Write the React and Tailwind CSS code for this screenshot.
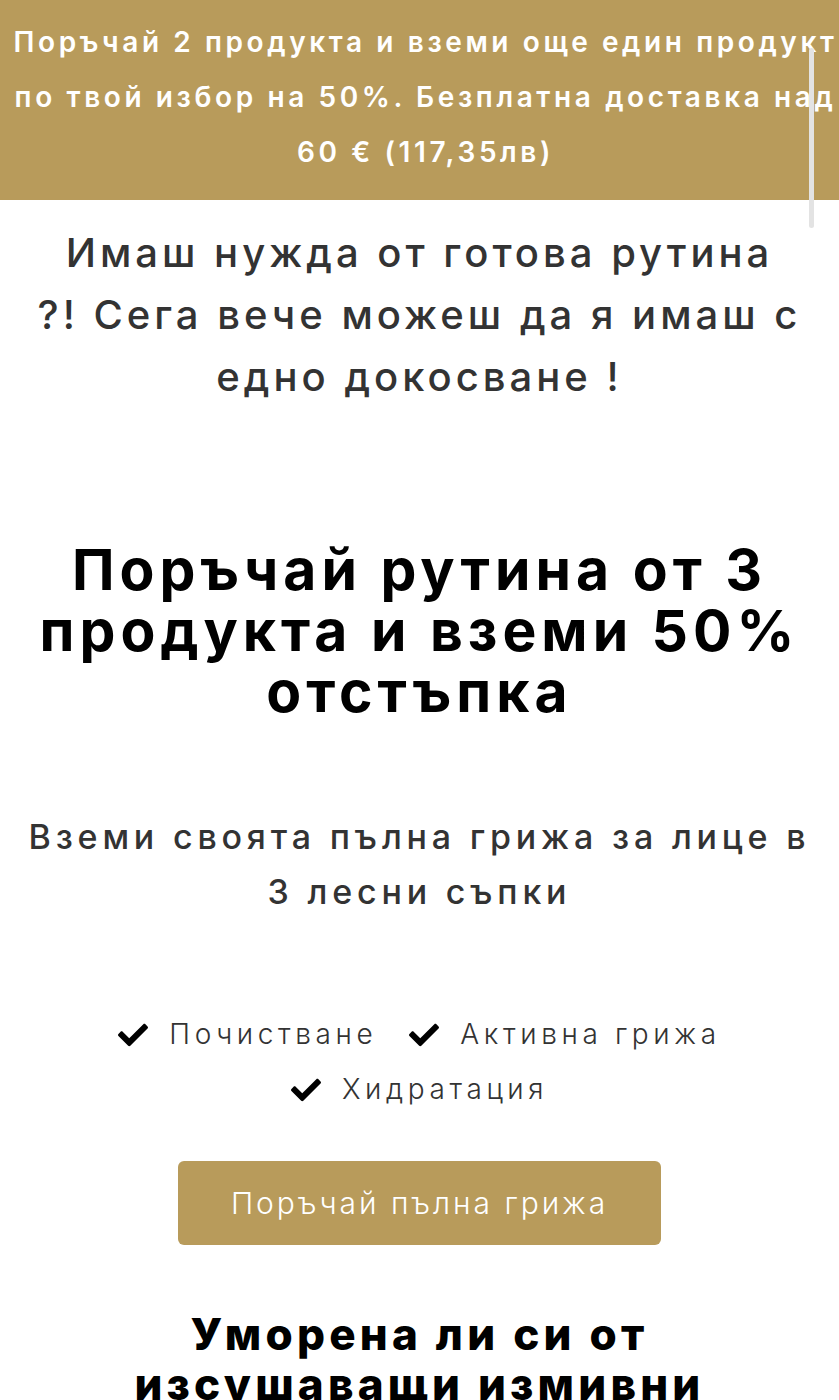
import React from "react";
import { FaCheck } from "react-icons/fa";

const font = { fontFamily: 'Inter, "Noto Sans", sans-serif' };

function Check() {
  return <FaCheck className="shrink-0 text-black w-[30px] h-[30px]" />;
}

export default function App() {
  return (
    <div lang="bg" className="relative w-[839px] h-[1400px] overflow-hidden bg-white" style={font}>
      <div className="absolute left-[809px] top-[48px] w-[5px] h-[180px] rounded-full bg-[#e3e3e3] z-10" />

      <div className="h-[200px] bg-[#b89b5b] flex flex-col justify-center pl-[12px] pb-[6px] overflow-hidden">
        <div className="text-white text-[28px] leading-[55px] font-semibold text-center whitespace-nowrap tracking-[3.6px]">
          <div>Поръчай 2 продукта и вземи още един продукт</div>
          <div>по твой избор на 50%. Безплатна доставка над</div>
          <div>60 € (117,35лв)</div>
        </div>
      </div>

      <div className="flex flex-col items-center text-center">
        <h2 className="mt-[22px] text-[#333333] text-[40px] leading-[62px] font-medium whitespace-nowrap tracking-[4px]">
          <div>Имаш нужда от готова рутина</div>
          <div>?! Сега вече можеш да я имаш с</div>
          <div>едно докосване !</div>
        </h2>

        <h1 className="mt-[131px] text-black text-[57px] leading-[61px] font-bold whitespace-nowrap tracking-[5px]">
          <div>Поръчай рутина от 3</div>
          <div>продукта и вземи 50%</div>
          <div>отстъпка</div>
        </h1>

        <h3 className="mt-[87px] text-[#333333] text-[34px] leading-[55px] font-medium whitespace-nowrap tracking-[4.8px]">
          <div>Вземи своята пълна грижа за лице в</div>
          <div>3 лесни съпки</div>
        </h3>

        <div className="mt-[88px] w-[700px] flex flex-wrap justify-center text-[#333333] text-[28px] leading-[55px] font-light tracking-[4.6px]">
          <div className="flex items-center gap-[21px] mx-[16px]">
            <Check />
            <span>Почистване</span>
          </div>
          <div className="flex items-center gap-[21px] mx-[16px]">
            <Check />
            <span>Активна грижа</span>
          </div>
          <div className="flex items-center gap-[21px] mx-[16px]">
            <Check />
            <span>Хидратация</span>
          </div>
        </div>

        <button className="mt-[44px] w-[483px] h-[84px] rounded-[6px] bg-[#b89b5b] text-white text-[30px] font-light tracking-[3px]">
          Поръчай пълна грижа
        </button>

        <h2 className="mt-[64px] text-black text-[44px] leading-[50px] font-extrabold whitespace-nowrap tracking-[4.2px]">
          <div>Уморена ли си от</div>
          <div>изсушаващи измивни</div>
        </h2>
      </div>
    </div>
  );
}
